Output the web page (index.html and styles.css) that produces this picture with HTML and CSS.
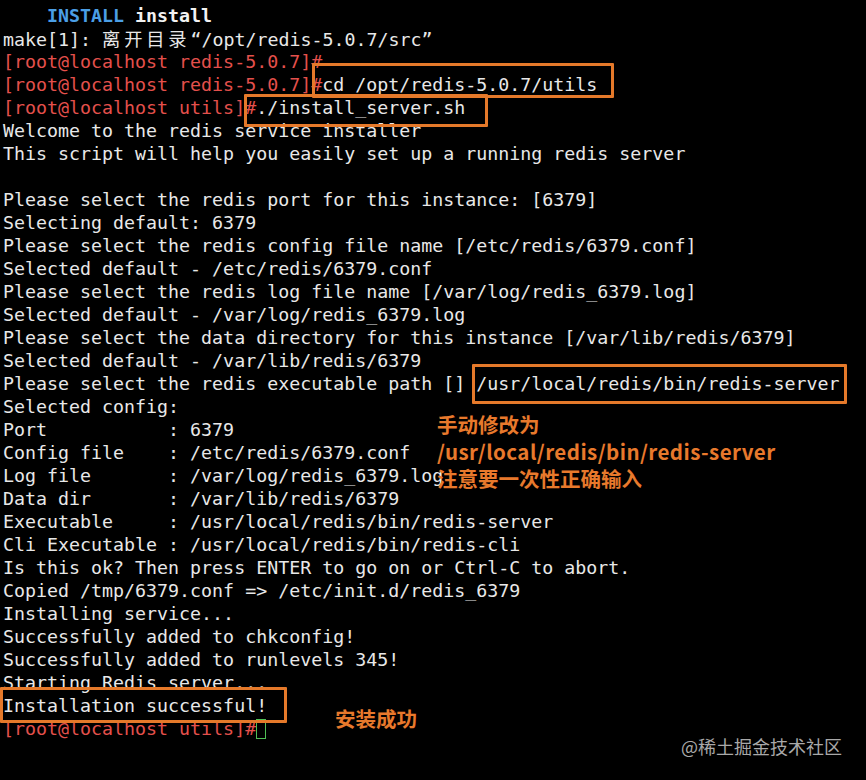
FILE: index.html
```html
<!DOCTYPE html>
<html lang="zh-CN">
<head>
<meta charset="utf-8">
<title>redis install_server</title>
<link rel="stylesheet" href="styles.css">
</head>
<body>
<div class="screen">
  <div class="term">
    <div class="ln b">    <span class="blue">INSTALL</span> install</div>
    <div class="ln">make[1]: <span class="cjk">离开目录</span>“/opt/redis-5.0.7/src”</div>
    <div class="ln"><span class="red">[root@localhost redis-5.0.7]#</span></div>
    <div class="ln"><span class="red">[root@localhost redis-5.0.7]#</span>cd /opt/redis-5.0.7/utils</div>
    <div class="ln"><span class="red">[root@localhost utils]#</span>./install_server.sh</div>
    <div class="ln">Welcome to the redis service installer</div>
    <div class="ln">This script will help you easily set up a running redis server</div>
    <div class="ln"> </div>
    <div class="ln">Please select the redis port for this instance: [6379]</div>
    <div class="ln">Selecting default: 6379</div>
    <div class="ln">Please select the redis config file name [/etc/redis/6379.conf]</div>
    <div class="ln">Selected default - /etc/redis/6379.conf</div>
    <div class="ln">Please select the redis log file name [/var/log/redis_6379.log]</div>
    <div class="ln">Selected default - /var/log/redis_6379.log</div>
    <div class="ln">Please select the data directory for this instance [/var/lib/redis/6379]</div>
    <div class="ln">Selected default - /var/lib/redis/6379</div>
    <div class="ln">Please select the redis executable path [] /usr/local/redis/bin/redis-server</div>
    <div class="ln">Selected config:</div>
    <div class="ln">Port           : 6379</div>
    <div class="ln">Config file    : /etc/redis/6379.conf</div>
    <div class="ln">Log file       : /var/log/redis_6379.log</div>
    <div class="ln">Data dir       : /var/lib/redis/6379</div>
    <div class="ln">Executable     : /usr/local/redis/bin/redis-server</div>
    <div class="ln">Cli Executable : /usr/local/redis/bin/redis-cli</div>
    <div class="ln">Is this ok? Then press ENTER to go on or Ctrl-C to abort.</div>
    <div class="ln">Copied /tmp/6379.conf =&gt; /etc/init.d/redis_6379</div>
    <div class="ln">Installing service...</div>
    <div class="ln">Successfully added to chkconfig!</div>
    <div class="ln">Successfully added to runlevels 345!</div>
    <div class="ln">Starting Redis server...</div>
    <div class="ln">Installation successful!</div>
    <div class="ln"><span class="red">[root@localhost utils]#</span><span class="cursor"></span></div>
  </div>

  <div class="box box-cd"></div>
  <div class="box box-install"></div>
  <div class="box box-path"></div>
  <div class="box box-ok"></div>

  <div class="note note-path">
    <div class="nl">手动修改为</div>
    <div class="nl latin">/usr/local/redis/bin/redis-server</div>
    <div class="nl">注意要一次性正确输入</div>
  </div>
  <div class="note note-ok">安装成功</div>
  <div class="watermark">@稀土掘金技术社区</div>
</div>
</body>
</html>
```

FILE: styles.css
```css
html, body {
  margin: 0;
  padding: 0;
  background: #000;
}

.screen {
  position: relative;
  width: 866px;
  height: 780px;
  overflow: hidden;
  background: #000;
}

.term {
  padding: 4px 0 0 3px;
  font-family: "DejaVu Sans Mono", "Noto Sans CJK SC", monospace;
  font-size: 18.29px;
  line-height: 23px;
  color: #e8e8e8;
}

.ln {
  white-space: pre;
  height: 23px;
}

.b {
  font-weight: bold;
  color: #f2f2f2;
}

.blue {
  color: #4b9fe6;
}

.red {
  color: #e4504c;
}

.cjk {
  font-family: "Noto Sans CJK SC", sans-serif;
  letter-spacing: 3.8px;
}

.cursor {
  display: inline-block;
  width: 10px;
  height: 20px;
  border: 1px solid #4fbf55;
  box-sizing: border-box;
  vertical-align: -4px;
}

.box {
  position: absolute;
  border: 3px solid #e5792a;
  box-sizing: border-box;
  border-radius: 1px;
}

.box-cd {
  left: 312px;
  top: 63px;
  width: 302px;
  height: 35px;
}

.box-install {
  left: 244px;
  top: 94px;
  width: 244px;
  height: 33px;
}

.box-path {
  left: 472px;
  top: 364px;
  width: 375px;
  height: 40px;
}

.box-ok {
  left: 0;
  top: 687px;
  width: 287px;
  height: 36px;
}

.note {
  position: absolute;
  font-family: "Noto Sans CJK SC", "Noto Sans", sans-serif;
  font-weight: bold;
  color: #e8792c;
  font-size: 20.5px;
  line-height: 27px;
  white-space: nowrap;
}

.note-path {
  left: 437px;
  top: 411px;
}

.nl {
  height: 27px;
}

.note-path .latin {
  letter-spacing: 0.45px;
}

.note-ok {
  left: 335px;
  top: 705px;
}

.watermark {
  position: absolute;
  left: 681px;
  top: 734px;
  font-family: "Noto Sans CJK SC", sans-serif;
  font-size: 18px;
  line-height: 24px;
  letter-spacing: 0;
  color: #a9a9a9;
  white-space: nowrap;
}
```
